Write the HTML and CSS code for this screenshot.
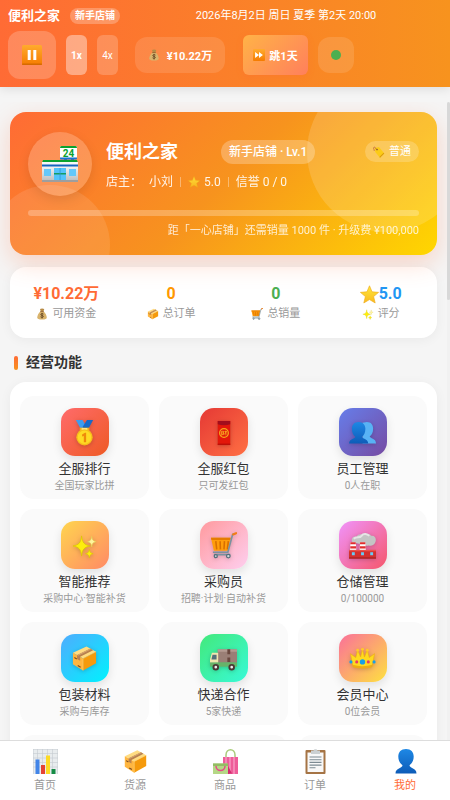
FILE: index.html
```html
<!DOCTYPE html>
<html lang="zh-CN">
<head>
    <meta charset="UTF-8">
    <meta name="viewport" content="width=device-width, initial-scale=1.0">
    <title>便利之家</title>
    <link rel="stylesheet" href="styles.css">
</head>
<body>
<svg class="sprite" aria-hidden="true">
    <defs>
        <linearGradient id="g-orange" x1="0" y1="0" x2="0" y2="1"><stop offset="0" stop-color="#ffab2e"/><stop offset="1" stop-color="#f57c00"/></linearGradient>
        <linearGradient id="g-wall" x1="0" y1="0" x2="0" y2="1"><stop offset="0" stop-color="#f5f5f5"/><stop offset="1" stop-color="#bdbdbd"/></linearGradient>
        <linearGradient id="g-gold" x1="0" y1="0" x2="0" y2="1"><stop offset="0" stop-color="#ffe83b"/><stop offset="1" stop-color="#f9b91f"/></linearGradient>
        <linearGradient id="g-navy" x1="0" y1="0" x2="0" y2="1"><stop offset="0" stop-color="#1e88e5"/><stop offset="1" stop-color="#0d5cb8"/></linearGradient>
    </defs>
    <symbol id="pause" viewBox="0 0 20 20">
        <rect width="20" height="20" rx="1.5" fill="url(#g-orange)"/>
        <rect y="18.5" width="20" height="1.5" rx=".7" fill="#d66a00"/>
        <rect x="5.7" y="5" width="3" height="10" fill="#fff"/>
        <rect x="11.3" y="5" width="3" height="10" fill="#fff"/>
    </symbol>
    <symbol id="skip" viewBox="0 0 20 20">
        <rect width="20" height="20" rx="1.5" fill="url(#g-orange)"/>
        <path d="M3.5 5l6.5 5-6.5 5zM10 5l6.5 5-6.5 5z" fill="#fff"/>
    </symbol>
    <symbol id="bag" viewBox="0 0 24 24">
        <path d="M8 2c2-1.500 6-1.500 8.500 0L15 7H9.500z" fill="#b78b46"/>
        <path d="M9 7h6c4 3 6.500 8 6.500 12 0 3-3 4-9.500 4s-9.500-1-9.500-4C2.500 15 5 10 9 7z" fill="#d9b36c"/>
        <path d="M8.500 6.500h7v1.700h-7z" fill="#8d5a2b"/>
        <path d="M15 12.300c-1-1.300-5.500-1.500-5.500.9 0 2.300 5.300 1.200 5.300 3.700 0 2.200-4.600 2.300-5.800.6M12.100 10v11" fill="none" stroke="#5d4020" stroke-width="1.600"/>
    </symbol>
    <symbol id="tag" viewBox="0 0 24 24">
        <path d="M4 4l8-2 10.500 13-8.500 8.500L4.500 12z" fill="#fccb16"/>
        <path d="M14 23.500l8.500-8.500-1.200-1.500-8.500 8.300z" fill="#d9980b"/>
        <circle cx="8" cy="7" r="1.700" fill="#8d5a2b"/>
        <path d="M8 7C5 4 3 1 1.500 3S4 9 2 10" fill="none" stroke="#b04a2a" stroke-width="1.200"/>
    </symbol>
    <symbol id="star" viewBox="0 0 24 24">
        <path d="M12 1l3.200 7.600 8.300.7-6.300 5.300 2 8.100L12 18.400l-7.200 4.300 2-8.100L.5 9.300l8.300-.7z" fill="url(#g-gold)" stroke="#efab18" stroke-width=".8"/>
    </symbol>
    <symbol id="sparkles" viewBox="0 0 28 28">
        <path d="M11 4c.8 7 2.600 9.400 9 10.500-6.400 1.100-8.200 3.500-9 10.500-.8-7-2.600-9.400-9-10.500C8.400 13.400 10.200 11 11 4z" fill="#fdee0c" stroke="#d9c400" stroke-width=".7"/>
        <path d="M21.500 4.500c.4 3.600 1.300 4.800 4.500 5.500-3.200.7-4.100 1.900-4.500 5.500-.4-3.600-1.300-4.800-4.500-5.500 3.200-.7 4.100-1.900 4.500-5.500z" fill="#fff59d" stroke="#e3cf50" stroke-width=".6"/>
        <path d="M19 18c.5 3 1.200 4 4 4.500-2.800.5-3.500 1.500-4 4.500-.5-3-1.200-4-4-4.500 2.800-.5 3.500-1.500 4-4.500z" fill="#fdee0c" stroke="#d9c400" stroke-width=".6"/>
    </symbol>
    <symbol id="box" viewBox="0 0 28 28">
        <path d="M2 8L16 1.500 26 7 12.500 14z" fill="#ffdc82"/>
        <path d="M2 8l10.500 6v12.500L2 20z" fill="#ffb640"/>
        <path d="M12.500 14L26 7v12l-13.500 7.500z" fill="#f59a0c"/>
        <path d="M6.300 10.400L20 3.700l3 1.700L9.500 12.300v4l-3.200-1.900z" fill="#b9814f"/>
        <path d="M7 10.800l13.500-6.700" stroke="#dfb078" stroke-width=".8"/>
        <path d="M3.500 13l2.500 1.500M7 21.200l3 1.800" stroke="#7d4b20" stroke-width="1.200"/>
        <path d="M12.500 14v12.500M12.500 14L26 7" fill="none" stroke="#ffd06b" stroke-width=".6"/>
    </symbol>
    <symbol id="cart" viewBox="0 0 28 28">
        <path d="M1 6h20.500l-3 13.500H4z" fill="#ff9d0b"/>
        <path d="M1 6h20.500l-.5 2.300H1.500z" fill="#e67c00"/>
        <path d="M6 9.500l1 8.500M10.500 9.500l.3 8.500M15 9.500l-.5 8.500M19 9.500L18 18" stroke="#d86f00" stroke-width="1.600"/>
        <path d="M26 1.500l-2.500 1-5 18.500H3M4 23.500h17" fill="none" stroke="#7a929f" stroke-width="1.700"/>
        <path d="M24 2.500l3-1.300" stroke="#f27d16" stroke-width="2.300" stroke-linecap="round"/>
        <g fill="#cfd8dc" stroke="#546e7a" stroke-width="1.300"><circle cx="6" cy="25" r="1.600"/><circle cx="19" cy="25" r="1.900"/></g>
    </symbol>
    <symbol id="medal" viewBox="0 0 28 28">
        <path d="M5 1h7l5 9h-7z" fill="#3d9cf0"/>
        <path d="M16.500 1H23l-5 9h-5l-.8-2z" fill="#1769c7"/>
        <path d="M9 9h10v4H9z" fill="#f2ae14"/>
        <path d="M11 9.500h6v2h-6z" fill="#fff0a0"/>
        <circle cx="14" cy="19" r="8.500" fill="#f7bd1b"/>
        <circle cx="14" cy="19" r="7" fill="#ffda24"/>
        <path d="M11.500 16l3-1.800h1.200V24h-2.400v-6.500l-1.800.7z" fill="#ef8b0b"/>
    </symbol>
    <symbol id="redpacket" viewBox="0 0 28 28">
        <path d="M8 2h13v25H8z" fill="#e3170a"/>
        <path d="M8 2h13v3.500q-6.500 2-13 0z" fill="#a10d1c"/>
        <path d="M8 25.500h13V27H8z" fill="#bd1008"/>
        <circle cx="14.500" cy="14.500" r="4.500" fill="#e3170a" stroke="#f7a81b" stroke-width="1.300"/>
        <path d="M12 12.700h2v3.500h-2zM12.500 16.200l-.7 1M15 13h2.500M16.500 12v5M16.500 13.500L15 16M12.500 14.500h1.500" fill="none" stroke="#f9b624" stroke-width=".8"/>
    </symbol>
    <symbol id="people" viewBox="0 0 28 28">
        <path d="M18.500 3c4.500 0 6.500 3 6.500 7 0 4-1.500 6.500-3.500 8 0 2.500 6.500 1.800 6.500 7.500H14V4z" fill="#58b3f5"/>
        <path d="M10 3c4.500 0 7 3 7 7.200S15.500 17 13.500 18.500c0 2.500 6 1.500 6.500 7H0c.5-5.500 6.500-4.500 6.500-7C4.500 17 3 14.500 3 10.200S5.500 3 10 3z" fill="url(#g-navy)"/>
    </symbol>
    <symbol id="factory" viewBox="0 0 28 28">
        <path d="M3 10c-1-4 2-6 5-5 1-3 5-3 7-2 3-2 7-1 8 1 4-.5 5.500 3 4.500 6s-4 5-7 4c-3 1-5-.5-6-2-4 1-6-1-11.500-2z" fill="#c4c4c4"/>
        <path d="M5 7c3-3 6 0 8-3s6-2 8 0" fill="none" stroke="#e5e5e5" stroke-width="2"/>
        <path d="M1.500 10.500h5.500l.6 9H1zM11.500 10.500H17l.5 9H11z" fill="#fff"/>
        <path d="M1.500 10.500H7v2.200H1.400zM1.300 14.700h6v2.300h-6zM11.500 10.500H17v2.200h-5.600zM11.300 14.700h6v2.300h-6z" fill="#e02d2d"/>
        <path d="M0 19h28v8.500H0z" fill="#d3302f"/>
        <path d="M0 18.500h28V20H0z" fill="#ed514b"/>
        <path d="M3 21h3v3H3zM12.500 21h3v3h-3zM22 21h3v3h-3z" fill="#66cdf7"/>
        <path d="M0 26.500h28v1H0z" fill="#9d1b1b"/>
    </symbol>
    <symbol id="truck" viewBox="0 0 28 28">
        <path d="M8 4.500h20v14H8z" fill="#9a7f76"/>
        <path d="M8 4.500h20V7H8z" fill="#b39a91"/>
        <path d="M18 4.500h3v5h-3zM18 13h3v5h-3z" fill="#69483f"/>
        <path d="M2 8h6.500v13H0v-6z" fill="#f0e5ae"/>
        <path d="M2.600 10h4.200v5H1.500z" fill="#54707c"/>
        <path d="M0 18h28v4.500H0z" fill="#67b36a"/>
        <g fill="#eee" stroke="#4a3834" stroke-width="2"><circle cx="6" cy="23" r="2.400"/><circle cx="22.500" cy="23" r="2.400"/></g>
    </symbol>
    <symbol id="crown" viewBox="0 0 28 28">
        <path d="M4 22L1.500 9 7 13l2-8 3 7.500 2-8.500 2 8.500L19 5l2 8 5.500-4L24 22q-10 3-20 0z" fill="#ffd91f" stroke="#edad14" stroke-width=".7"/>
        <path d="M3.700 20.500q10.300 3 20.600 0l-.4 2.500q-9.900 2.500-19.800 0z" fill="#efac13"/>
        <g fill="#ffc928"><circle cx="14" cy="4.500" r="1.500"/><circle cx="9" cy="5.500" r="1.500"/><circle cx="19" cy="5.500" r="1.500"/></g>
        <g fill="#169fe8"><circle cx="14" cy="17.500" r="2.800"/><circle cx="2" cy="17.500" r="1.600"/><circle cx="26" cy="17.500" r="1.600"/></g>
        <g fill="#ea3c68"><circle cx="8" cy="17.500" r="1.600"/><circle cx="20" cy="17.500" r="1.600"/></g>
    </symbol>
    <symbol id="chart" viewBox="0 0 25 25">
        <path d="M0 0h25v25H0z" fill="#e8ecee"/>
        <path d="M0 4.500h25M0 9h25M0 13.500h25M0 18h25M4.500 0v25M9.500 0v25M14.500 0v25M19.500 0v25M.3 0v25M24.700 0v25M0 .3h25" stroke="#c4cbd0" stroke-width=".6"/>
        <path d="M2.500 10.500h4V25h-4z" fill="#4285e8"/>
        <path d="M8 16h4v9H8z" fill="#e54433"/>
        <path d="M13 6.500h4V25h-4z" fill="#fddb24"/>
        <path d="M18.500 20h4v5h-4z" fill="#168c46"/>
    </symbol>
    <symbol id="shopping" viewBox="0 0 25 25">
        <path d="M13 10V6c0-7 9-7 9 0v4" fill="none" stroke="#a9cc7a" stroke-width="1.500"/>
        <path d="M10 8h15v17H10z" fill="#ee5d99"/>
        <path d="M13 8v17M17 8v17M21 8v17" stroke="#f79bc2" stroke-width="1.400"/>
        <path d="M0 14.500h15V25H0z" fill="#b5d886"/>
        <path d="M0 14.500h15V17H0z" fill="#93bd63"/>
        <path d="M15 17l4 7.500-4 .5z" fill="#d42b70"/>
        <path d="M3 17c0 6 9 6 9 0" fill="none" stroke="#e64b87" stroke-width="1.500"/>
    </symbol>
    <symbol id="clipboard" viewBox="0 0 25 25">
        <rect x="2.500" y="1" width="20" height="24" rx="1" fill="#a57445"/>
        <path d="M4.500 3.500h16V23h-16z" fill="#f8f8f8"/>
        <path d="M8 1.500h2.500C11-.3 14-.3 14.500 1.500H17V5H8z" fill="#cbd0d2"/>
        <path d="M6.500 8h12M6.500 10.700h12M6.500 13.400h12M6.500 16.100h12M6.500 18.800h6" stroke="#7c8a92" stroke-width="1.100"/>
    </symbol>
    <symbol id="user" viewBox="0 0 25 25">
        <path d="M13 0c5 0 7.700 3 7.700 7.500 0 4-1.700 7-4.200 8.700 0 3.300 7 2.300 7 8.300H2.500c0-6 7-5 7-8.300-2.500-1.700-4.200-4.700-4.200-8.700C5.300 3 8 0 13 0z" fill="url(#g-navy)"/>
    </symbol>
</svg>

<header class="top-bar">
    <div class="top-info">
        <span class="top-name">便利之家</span>
        <span class="top-level">新手店铺</span>
        <span class="top-date">2026年8月2日 周日 夏季 第2天 20:00</span>
    </div>
    <div class="top-controls">
        <button class="pause-btn" aria-label="暂停"><svg class="icon"><use href="#pause"/></svg></button>
        <button class="speed-btn active">1x</button>
        <button class="speed-btn">4x</button>
        <div class="money"><svg class="icon"><use href="#bag"/></svg>¥10.22万</div>
        <button class="skip-btn"><svg class="icon"><use href="#skip"/></svg>跳1天</button>
        <div class="status"><span class="status-dot"></span></div>
    </div>
</header>

<div class="page">
<main class="content">
    <section class="shop-card">
        <div class="shop-main">
            <div class="shop-avatar">
                <svg class="icon" viewBox="0 0 36 36">
                    <path d="M22 13h3v3h-3zM29 13h3v3h-3z" fill="#546e7a"/>
                    <rect x="18" y="0" width="17" height="13" rx="1.500" fill="#fff"/>
                    <path d="M19.500 0h14q1.500 0 1.500 2H18q0-2 1.500-2z" fill="#0ba22f"/>
                    <path d="M18 11.500h17v1q0 1-1 1H19q-1 0-1-1z" fill="#1976d2"/>
                    <text x="26.500" y="10.500" class="store-sign">24</text>
                    <path d="M0 20h36v15H0z" fill="url(#g-wall)"/>
                    <path d="M1 14h34l1 3H0z" fill="#0ba22f"/>
                    <path d="M0 16h36v3H0z" fill="#f7f7f7"/>
                    <path d="M0 18.500h36v2H0z" fill="#1565c0"/>
                    <path d="M2 23h7v7H2zM27 23h7v7h-7z" fill="#64c8fa"/>
                    <path d="M12 22h12v12H12z" fill="#52c3fa"/>
                    <path d="M12 27h12v1.500H12z" fill="#169b62"/>
                    <path d="M17.700 22h.7v12h-.7z" fill="#2b93d0"/>
                    <path d="M0 34h36v2H0z" fill="#9e9e9e"/>
                </svg>
            </div>
            <div class="shop-detail">
                <div class="shop-title">
                    <h1>便利之家</h1>
                    <span class="shop-level">新手店铺 · Lv.1</span>
                    <span class="shop-tag"><svg class="icon"><use href="#tag"/></svg>普通</span>
                </div>
                <div class="shop-meta">
                    <span>店主：</span>
                    <span>小刘</span>
                    <i class="divider"></i>
                    <span class="score"><svg class="icon"><use href="#star"/></svg>5.0</span>
                    <i class="divider"></i>
                    <span>信誉 0 / 0</span>
                </div>
            </div>
        </div>
        <div class="progress"></div>
        <p class="progress-text">距「一心店铺」还需销量 1000 件 · 升级费 ¥100,000</p>
    </section>

    <section class="stats">
        <div class="stat"><strong class="orange">¥10.22万</strong><span><svg class="icon"><use href="#bag"/></svg>可用资金</span></div>
        <div class="stat"><strong class="amber">0</strong><span><svg class="icon"><use href="#box"/></svg>总订单</span></div>
        <div class="stat"><strong class="green">0</strong><span><svg class="icon"><use href="#cart"/></svg>总销量</span></div>
        <div class="stat"><strong class="blue"><svg class="icon"><use href="#star"/></svg>5.0</strong><span><svg class="icon"><use href="#sparkles"/></svg>评分</span></div>
    </section>

    <h2 class="section-title">经营功能</h2>
    <section class="menu">
        <button class="menu-item"><span class="menu-icon rank"><svg class="icon"><use href="#medal"/></svg></span><b>全服排行</b><small>全国玩家比拼</small></button>
        <button class="menu-item"><span class="menu-icon packet"><svg class="icon"><use href="#redpacket"/></svg></span><b>全服红包</b><small>只可发红包</small></button>
        <button class="menu-item"><span class="menu-icon staff"><svg class="icon"><use href="#people"/></svg></span><b>员工管理</b><small>0人在职</small></button>
        <button class="menu-item"><span class="menu-icon smart"><svg class="icon"><use href="#sparkles"/></svg></span><b>智能推荐</b><small>采购中心·智能补货</small></button>
        <button class="menu-item"><span class="menu-icon buyer"><svg class="icon"><use href="#cart"/></svg></span><b>采购员</b><small>招聘·计划·自动补货</small></button>
        <button class="menu-item"><span class="menu-icon storage"><svg class="icon"><use href="#factory"/></svg></span><b>仓储管理</b><small>0/100000</small></button>
        <button class="menu-item"><span class="menu-icon pack"><svg class="icon"><use href="#box"/></svg></span><b>包装材料</b><small>采购与库存</small></button>
        <button class="menu-item"><span class="menu-icon express"><svg class="icon"><use href="#truck"/></svg></span><b>快递合作</b><small>5家快递</small></button>
        <button class="menu-item"><span class="menu-icon member"><svg class="icon"><use href="#crown"/></svg></span><b>会员中心</b><small>0位会员</small></button>
        <button class="menu-item"></button>
        <button class="menu-item"></button>
        <button class="menu-item"></button>
    </section>
</main>
<div class="scroll-rail"><div class="scroll-thumb"></div></div>
</div>

<nav class="tab-bar">
    <a href="#home"><svg class="icon"><use href="#chart"/></svg>首页</a>
    <a href="#supply"><svg class="icon"><use href="#box"/></svg>货源</a>
    <a href="#goods"><svg class="icon"><use href="#shopping"/></svg>商品</a>
    <a href="#orders"><svg class="icon"><use href="#clipboard"/></svg>订单</a>
    <a href="#mine" class="active"><svg class="icon"><use href="#user"/></svg>我的</a>
</nav>
</body>
</html>
```
FILE: styles.css
```css
* {
  box-sizing: border-box;
  margin: 0;
  padding: 0;
}

body {
  font-family: Roboto, "Noto Sans CJK SC", sans-serif;
  background: #f5f5f5;
  color: #333;
  height: 100vh;
  display: flex;
  flex-direction: column;
  overflow: hidden;
}

button {
  font-family: inherit;
  border: none;
  cursor: pointer;
}

.sprite {
  position: absolute;
  width: 0;
  height: 0;
}

.icon {
  flex-shrink: 0;
  width: 12px;
  height: 12px;
}

.store-sign {
  font-size: 10px;
  font-weight: bold;
  text-anchor: middle;
  fill: #0ba22f;
}

/* header */
.top-bar {
  flex-shrink: 0;
  padding: 8px;
  color: #fff;
  background: linear-gradient(90deg, #ff6b35, #f7931e);
  box-shadow: 0 2px 10px rgba(0, 0, 0, 0.1);
}

.top-info {
  display: flex;
  align-items: center;
  gap: 10px;
  height: 16px;
  margin-bottom: 7px;
}

.top-name {
  font-size: 13px;
  line-height: 16px;
  font-weight: bold;
}

.top-level {
  padding: 0 5px;
  font-size: 10px;
  line-height: 16px;
  font-weight: bold;
  border-radius: 8px;
  background: rgba(255, 255, 255, 0.25);
}

.top-date {
  flex: 1;
  text-align: center;
  font-size: 11px;
  line-height: 16px;
}

.top-controls {
  display: flex;
  align-items: center;
  gap: 10px;
}

.pause-btn {
  display: flex;
  align-items: center;
  justify-content: center;
  width: 48px;
  height: 48px;
  border-radius: 12px;
  background: rgba(255, 255, 255, 0.2);
}

.pause-btn .icon {
  width: 20px;
  height: 20px;
}

.speed-btn {
  width: 21px;
  height: 40px;
  font-size: 10px;
  color: #fff;
  border-radius: 6px;
  background: rgba(255, 255, 255, 0.2);
}

.speed-btn.active {
  font-weight: bold;
  background: rgba(255, 255, 255, 0.4);
}

.money {
  display: flex;
  align-items: center;
  justify-content: center;
  gap: 7px;
  width: 90px;
  height: 36px;
  margin: 0 8px 0 7px;
  font-size: 11px;
  font-weight: bold;
  border-radius: 12px;
  background: rgba(255, 255, 255, 0.12);
}

.skip-btn {
  display: flex;
  align-items: center;
  justify-content: center;
  gap: 4px;
  width: 65px;
  height: 40px;
  font-size: 11px;
  font-weight: bold;
  color: #fff;
  border-radius: 6px;
  background: linear-gradient(135deg, #ffb347, #ff7f5c);
  box-shadow: 0 2px 6px rgba(255, 107, 53, 0.3);
}

.status {
  display: flex;
  align-items: center;
  justify-content: center;
  width: 36px;
  height: 36px;
  border-radius: 12px;
  background: rgba(255, 255, 255, 0.12);
}

.status-dot {
  width: 10px;
  height: 10px;
  border-radius: 50%;
  background: #4caf50;
}

/* scrolling page */
.page {
  flex: 1;
  display: flex;
  min-height: 0;
  margin-top: 15px;
}

.content {
  flex: 1;
  padding: 10px;
  overflow-y: auto;
  scrollbar-width: none;
}

.scroll-rail {
  width: 3px;
  background: #f1f1f1;
}

.scroll-thumb {
  height: 31%;
  border-radius: 2px;
  background: #d8d8d8;
}

/* shop card */
.shop-card {
  position: relative;
  overflow: hidden;
  padding: 20px 18px 15px;
  color: #fff;
  border-radius: 16px;
  background: linear-gradient(135deg, #ff6b35 0%, #f7931e 50%, #ffd700 100%);
  box-shadow: 0 8px 24px rgba(255, 107, 53, 0.25);
}

.shop-card::before {
  content: "";
  position: absolute;
  top: -40px;
  right: -30px;
  width: 160px;
  height: 160px;
  border-radius: 50%;
  background: rgba(255, 255, 255, 0.15);
}

.shop-card::after {
  content: "";
  position: absolute;
  bottom: -50px;
  left: -20px;
  width: 120px;
  height: 120px;
  border-radius: 50%;
  background: rgba(255, 255, 255, 0.1);
}

/* keep the content above the two circles */
.shop-main {
  position: relative;
  z-index: 1;
  display: flex;
  align-items: center;
  gap: 14px;
}

.shop-avatar {
  display: flex;
  align-items: center;
  justify-content: center;
  width: 64px;
  height: 64px;
  border-radius: 50%;
  background: rgba(255, 255, 255, 0.2);
  box-shadow: 0 4px 12px rgba(0, 0, 0, 0.1);
}

.shop-avatar .icon {
  width: 36px;
  height: 36px;
}

.shop-detail {
  flex: 1;
  padding-top: 3px;
}

.shop-title {
  display: flex;
  align-items: center;
  height: 24px;
  margin-bottom: 8px;
}

.shop-title h1 {
  font-size: 18px;
  line-height: 24px;
  margin-right: 43px;
}

.shop-level {
  padding: 0 8px;
  font-size: 12px;
  line-height: 24px;
  font-weight: 500;
  border-radius: 12px;
  background: rgba(255, 255, 255, 0.25);
}

.shop-tag {
  display: flex;
  align-items: center;
  gap: 4px;
  margin-left: auto;
  padding: 0 8px;
  font-size: 11px;
  line-height: 21px;
  border-radius: 11px;
  background: rgba(255, 255, 255, 0.2);
}

.shop-meta {
  display: flex;
  align-items: center;
  gap: 7px;
  font-size: 12px;
  line-height: 20px;
  opacity: 0.9;
}

.score {
  display: flex;
  align-items: center;
  gap: 4px;
}

.divider {
  width: 1px;
  height: 10px;
  background: rgba(255, 255, 255, 0.4);
}

.progress {
  height: 6px;
  margin-top: 14px;
  border-radius: 3px;
  background: rgba(255, 255, 255, 0.25);
}

.progress-text {
  margin-top: 6px;
  font-size: 11px;
  line-height: 18px;
  text-align: right;
  opacity: 0.8;
}

/* numbers */
.stats {
  display: grid;
  grid-template-columns: repeat(4, 1fr);
  margin-top: 12px;
  padding: 17px 4px 16px;
  border-radius: 16px;
  background: #fff;
  box-shadow: 0 2px 12px rgba(0, 0, 0, 0.05);
}

.stat strong {
  display: flex;
  align-items: center;
  justify-content: center;
  font-size: 16px;
  line-height: 20px;
}

.stat strong .icon {
  width: 19px;
  height: 19px;
}

.stat span {
  display: flex;
  align-items: center;
  justify-content: center;
  gap: 4px;
  margin-top: 2px;
  font-size: 11px;
  line-height: 16px;
  color: #999;
}

.orange { color: #ff6b35; }
.amber { color: #ff9800; }
.green { color: #4caf50; }
.blue { color: #2196f3; }

.section-title {
  display: flex;
  align-items: center;
  gap: 8px;
  padding: 0 4px;
  margin: 14px 0 9px;
  font-size: 14px;
  line-height: 21px;
}

.section-title::before {
  content: "";
  width: 4px;
  height: 14px;
  border-radius: 2px;
  background: linear-gradient(#ff6b35, #f7931e);
}

/* function grid */
.menu {
  display: grid;
  grid-template-columns: repeat(3, 1fr);
  grid-auto-rows: 103px;
  gap: 10px;
  padding: 14px 10px;
  border-radius: 16px;
  background: #fff;
  box-shadow: 0 2px 12px rgba(0, 0, 0, 0.05);
}

.menu-item {
  display: flex;
  flex-direction: column;
  align-items: center;
  padding-top: 12px;
  border-radius: 14px;
  background: #fafafa;
}

.menu-icon {
  display: flex;
  align-items: center;
  justify-content: center;
  width: 48px;
  height: 48px;
  margin-bottom: 4px;
  border-radius: 14px;
  box-shadow: 0 4px 10px rgba(0, 0, 0, 0.1);
}

.menu-icon .icon {
  width: 27px;
  height: 27px;
  filter: drop-shadow(0 1px 2px rgba(0, 0, 0, 0.2));
}

.menu-item b {
  font-size: 13px;
  line-height: 18px;
  font-weight: normal;
  color: #333;
}

.menu-item small {
  font-size: 10px;
  line-height: 16px;
  color: #999;
}

.rank { background: linear-gradient(135deg, #ff6b6b, #ee5a24); }
.packet { background: linear-gradient(135deg, #e53935, #ff7043); }
.staff { background: linear-gradient(135deg, #667eea, #764ba2); }
.smart { background: linear-gradient(135deg, #ffd54f, #ff8a65); }
.buyer { background: linear-gradient(135deg, #ff9a9e, #fecfef); }
.storage { background: linear-gradient(135deg, #f093fb, #f5576c); }
.pack { background: linear-gradient(135deg, #4facfe, #00f2fe); }
.express { background: linear-gradient(135deg, #43e97b, #38f9d7); }
.member { background: linear-gradient(135deg, #fa709a, #fee140); }

/* bottom tabs */
.tab-bar {
  display: flex;
  flex-shrink: 0;
  height: 60px;
  border-top: 1px solid #ddd;
  background: #fff;
}

.tab-bar a {
  flex: 1;
  display: flex;
  flex-direction: column;
  align-items: center;
  gap: 4px;
  padding-top: 8px;
  font-size: 11px;
  line-height: 16px;
  color: #999;
  text-decoration: none;
}

.tab-bar a.active {
  color: #ff6b35;
}

.tab-bar .icon {
  width: 25px;
  height: 25px;
}
```
